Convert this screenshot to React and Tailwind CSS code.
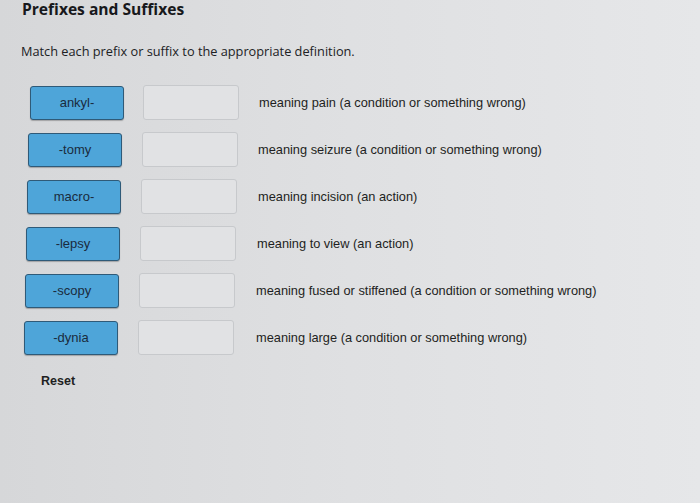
import React from "react";

const rows = [
  { term: "ankyl-", def: "meaning pain (a condition or something wrong)", ml: "ml-[30px]", bm: "ml-[19px]", dm: "ml-[20px]" },
  { term: "-tomy", def: "meaning seizure (a condition or something wrong)", ml: "ml-[28px]", bm: "ml-[20px]", dm: "ml-[20px]" },
  { term: "macro-", def: "meaning incision (an action)", ml: "ml-[27px]", bm: "ml-[20px]", dm: "ml-[21px]" },
  { term: "-lepsy", def: "meaning to view (an action)", ml: "ml-[26px]", bm: "ml-[20px]", dm: "ml-[21px]" },
  { term: "-scopy", def: "meaning fused or stiffened (a condition or something wrong)", ml: "ml-[25px]", bm: "ml-[20px]", dm: "ml-[21px]" },
  { term: "-dynia", def: "meaning large (a condition or something wrong)", ml: "ml-[24px]", bm: "ml-[20px]", dm: "ml-[22px]" },
];

export default function App() {
  return (
    <div className="w-[700px] h-[503px] overflow-hidden bg-gradient-to-r from-[#d6d7d9] via-[#dfe0e2] to-[#e6e7e9] font-['Liberation_Sans',Arial,sans-serif] text-[#1e1f22]">
      <div className="pl-[22px] pt-[1px] h-[19px] font-['Open_Sans',sans-serif] font-bold text-[15.6px] leading-[17px] text-[#17181b]">
        Prefixes and Suffixes
      </div>
      <div className="pl-[21px] mt-[24px] font-['Open_Sans',sans-serif] text-[12.75px] leading-[16px] text-[#202124]">
        Match each prefix or suffix to the appropriate definition.
      </div>
      <div className="mt-[26px] flex flex-col gap-[12px]">
        {rows.map((r) => (
          <div key={r.term} className={`flex items-center ${r.ml}`}>
            <div className="w-[94px] h-[34px] rounded-[3px] border border-[#2f5a78] bg-[#4ea5d9] shadow-[0_1px_1px_rgba(0,0,0,0.25)] flex items-center justify-center text-[13px] text-[#1a2b3d]">
              {r.term}
            </div>
            <div className={`${r.bm} w-[96px] h-[35px] rounded-[3px] border border-[#c7c9cc] bg-[#e1e2e4]`} />
            <div className={`${r.dm} text-[12.8px] text-[#1e1f22] whitespace-nowrap`}>{r.def}</div>
          </div>
        ))}
      </div>
      <div className="ml-[41px] mt-[17px] font-bold text-[12.5px] text-[#1e1f22]">Reset</div>
    </div>
  );
}
